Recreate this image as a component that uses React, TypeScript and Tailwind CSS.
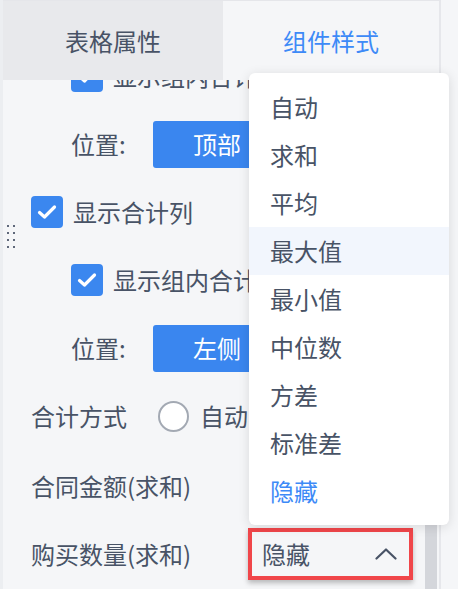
import React from 'react';

const font = { fontFamily: '"Noto Sans CJK SC", "Noto Sans", sans-serif' };

const Check: React.FC = () => (
  <div className="w-[32px] h-[32px] rounded-[4px] bg-[#3b87ef] flex items-center justify-center shrink-0">
    <svg width="20" height="16" viewBox="0 0 20 16" fill="none">
      <path d="M2.5 8.5 L7.5 13 L17.5 3" stroke="#fff" strokeWidth="3.2" strokeLinecap="round" strokeLinejoin="round" />
    </svg>
  </div>
);

const options = ['自动', '求和', '平均', '最大值', '最小值', '中位数', '方差', '标准差', '隐藏'];

const App: React.FC = () => {
  return (
    <div className="relative w-[458px] h-[589px] overflow-hidden bg-[#f5f6f8] flex text-[24px] text-[#485366]" style={font}>
      {/* left edge */}
      <div className="w-[3px] bg-[#eceef1] shrink-0" />

      {/* main panel */}
      <div className="w-[438px] shrink-0 flex flex-col border-r-2 border-[#e6e7eb] border-t border-t-[#e5e6ea]">
        <div className="flex h-[79px] shrink-0 relative z-10">
          <div className="w-[220px] bg-[#e8e9ec] flex items-center justify-center">表格属性</div>
          <div className="flex-1 bg-[#f5f6f8] flex items-center justify-center text-[#3d8af7]">组件样式</div>
        </div>

        <div className="flex-1 overflow-hidden">
          <div className="-mt-[38px] flex flex-col">
            <div className="h-[68px] flex items-center gap-[10px] pl-[68px]">
              <Check />
              <span>显示组内合计</span>
            </div>
            <div className="h-[68px] flex items-center pl-[68px]">
              <span className="w-[82px]">位置:</span>
              <div className="w-[128px] h-[47px] rounded-[3px] bg-[#3a86ef] text-white flex items-center justify-center">顶部</div>
            </div>
            <div className="h-[68px] flex items-center gap-[10px] pl-[28px]">
              <Check />
              <span>显示合计列</span>
            </div>
            <div className="h-[68px] flex items-center gap-[10px] pl-[68px]">
              <Check />
              <span>显示组内合计</span>
            </div>
            <div className="h-[68px] flex items-center pl-[68px]">
              <span className="w-[82px]">位置:</span>
              <div className="w-[128px] h-[47px] rounded-[3px] bg-[#3a86ef] text-white flex items-center justify-center">左侧</div>
            </div>
            <div className="h-[68px] flex items-center pl-[28px]">
              <span className="w-[127px]">合计方式</span>
              <div className="w-[31px] h-[31px] rounded-full border-2 border-[#a3a9b3] bg-white shrink-0" />
              <span className="ml-[11px]">自动</span>
            </div>
            <div className="h-[72px] flex items-center pl-[28px]">
              <span>合同金额(求和)</span>
            </div>
            <div className="h-[64px] flex items-center pl-[28px]">
              <span className="w-[217px]">购买数量(求和)</span>
              <div className="w-[165px] h-[52px] border-4 border-[#f0464a] bg-[#f5f6f8] shadow-[0_3px_5px_rgba(0,0,0,0.25)] flex items-center justify-between pl-[10px] pr-[12px]">
                <span>隐藏</span>
                <svg width="22" height="12" viewBox="0 0 22 12" fill="none">
                  <path d="M1.5 10.5 L11 1.5 L20.5 10.5" stroke="#485366" strokeWidth="2.2" strokeLinecap="round" strokeLinejoin="round" />
                </svg>
              </div>
            </div>
          </div>
        </div>
      </div>

      {/* scrollbar thumb */}
      <div className="absolute left-[425px] top-[400px] w-[12px] h-[189px] bg-[#d4d6db]" />

      {/* drag handle */}
      <div className="absolute left-[7px] top-[225px] grid grid-cols-2 gap-x-[4px] gap-y-[5px]">
        {Array.from({ length: 8 }).map((_, i) => (
          <div key={i} className="w-[2px] h-[2px] bg-[#5f687a]" />
        ))}
      </div>

      {/* dropdown */}
      <div className="absolute left-[249px] top-[73px] w-[200px] h-[452px] bg-white rounded-[6px] shadow-[0_2px_12px_rgba(0,0,0,0.12)] py-[10px] z-20">
        {options.map((o) => (
          <div
            key={o}
            className={`h-[48px] flex items-center pl-[21px] ${o === '最大值' ? 'bg-[#f2f6fd]' : ''} ${o === '隐藏' ? 'text-[#3d8af7]' : ''}`}
          >
            {o}
          </div>
        ))}
      </div>
    </div>
  );
};

export default App;
